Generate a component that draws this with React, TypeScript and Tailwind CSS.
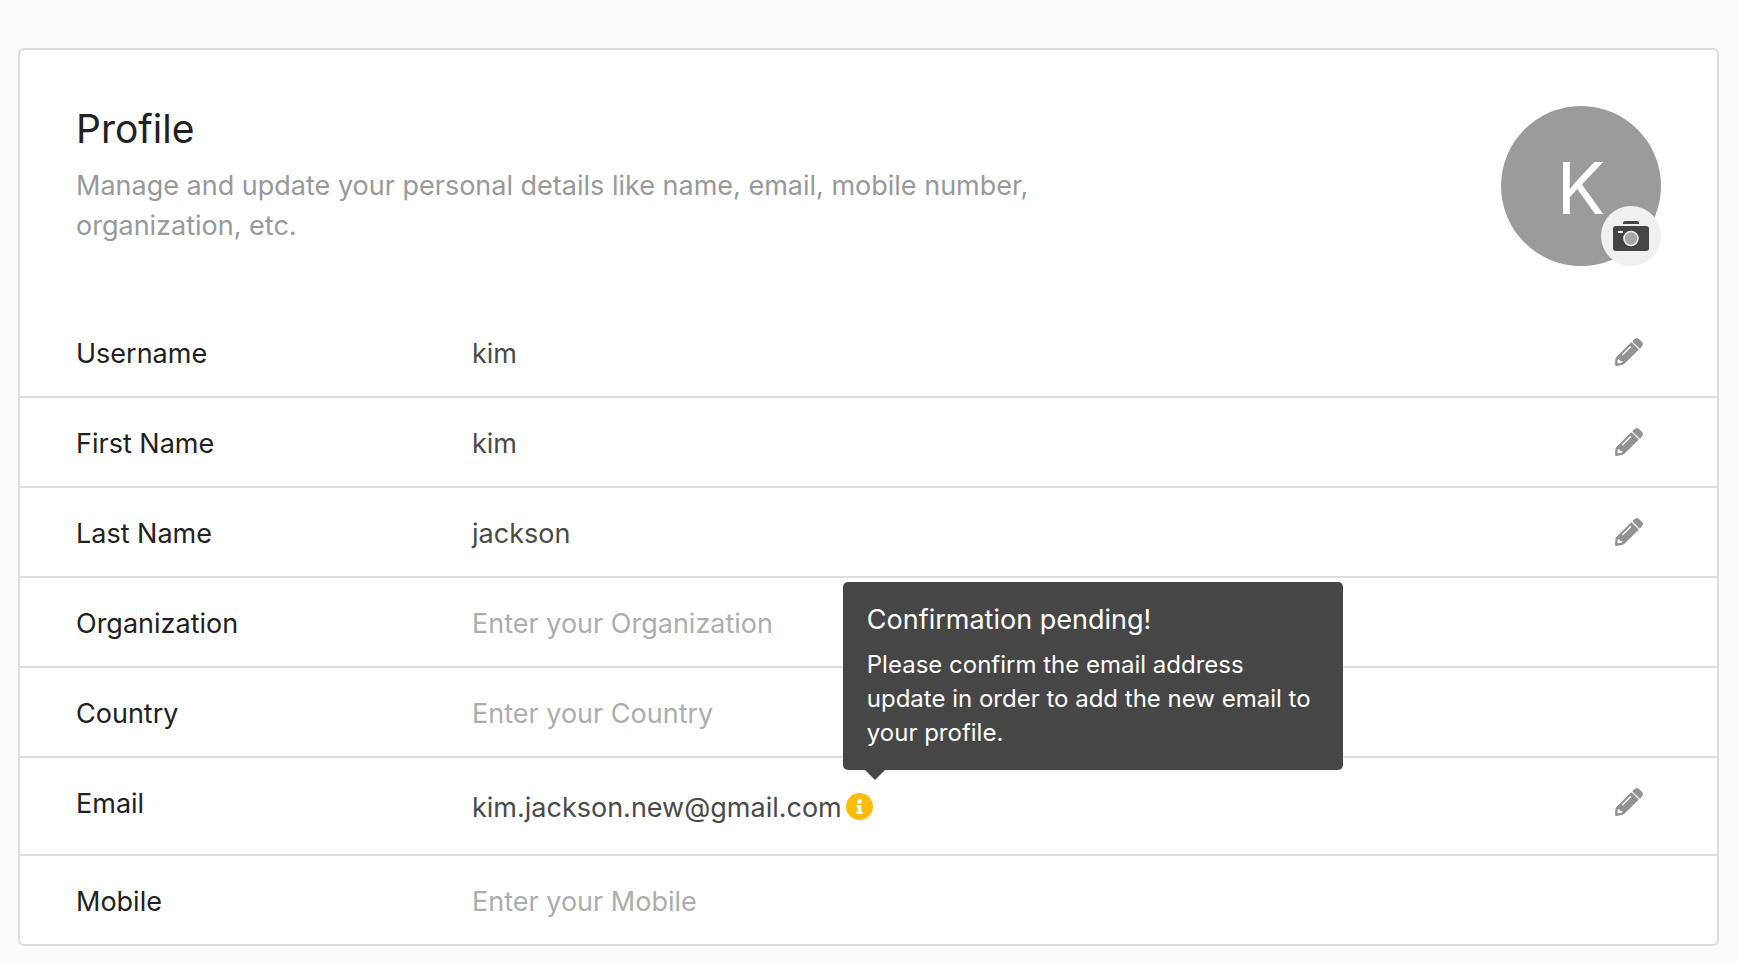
import type { ReactNode } from "react";

function PencilIcon() {
  return (
    <svg viewBox="0 0 28 28" className="block size-7" aria-hidden="true">
      <path
        fill="#929292"
        d="M19.300 1.200 20.500.4Q22.300-.5 23.900.9L27.100 4.100Q28.500 5.600 27.500 7.400L25.800 9.800Q24.900 10.900 24 10L18 4Q17.200 3 18.100 2.300Z"
      />
      <path
        fill="#929292"
        fillRule="evenodd"
        d="M15.700 4.800Q16.400 4.200 17.100 4.900L23.100 10.800Q23.700 11.500 23.100 12.200L9.400 25.800Q8.300 26.800 6.900 27.100L1.300 28Q0 28.100 0 26.800L.4 21.200Q.6 19.800 1.600 18.800ZM15.700 8.200Q15.200 8.200 14.800 8.600L7.300 16.100Q6.700 16.800 7.100 17.200Q7.500 17.600 8.200 17L15.900 9.400Q16.300 9 16.300 8.600Q16.200 8.200 15.700 8.200ZM3.900 21.300Q2.700 21.100 2.600 22.400L2.300 24.200Q2.400 25.200 3.500 25.300L5.300 25.100Q6.700 24.800 7.400 23.900L7.300 23L5.800 22.900Q4.900 22.800 4.800 21.900Z"
      />
    </svg>
  );
}

function CameraIcon() {
  return (
    <svg viewBox="0 0 36 30" className="block w-9" aria-hidden="true">
      <path fill="#454545" d="M10 3V2Q10 0 12 0H24Q26 0 26 2V3Z" />
      <rect x="0" y="5" width="36" height="25" rx="3" fill="#454545" />
      <rect x="5" y="10" width="5" height="2" fill="#fff" />
      <circle cx="18" cy="17.500" r="7" fill="#a6a6a6" stroke="#f0f0f0" strokeWidth="1.600" />
    </svg>
  );
}

function InfoIcon() {
  return (
    <svg viewBox="0 0 27 27" className="block size-[27px]" aria-hidden="true">
      <circle cx="13.500" cy="13.500" r="13.500" fill="#fdbc09" />
      <circle cx="13.600" cy="8.300" r="2.500" fill="#fff" />
      <path fill="#fff" d="M10.300 12H15.400V18.800H16.800V21H10.300V18.800H11.700V14.200H10.300Z" />
    </svg>
  );
}

function PendingNotice() {
  return (
    <button
      type="button"
      aria-label="Confirmation pending"
      aria-describedby="pending-tip"
      className="relative mt-[7px] ml-1 block self-start"
    >
      <InfoIcon />
      <span
        id="pending-tip"
        role="tooltip"
        className="absolute bottom-full -left-[3px] mb-[23px] block w-[500px] rounded-[5px] bg-[#464646] px-6 pt-[18px] pb-5 text-left text-white"
      >
        <span className="block text-[27px] leading-10">Confirmation pending!</span>
        <span className="mt-2 block text-2xl leading-[34px]">
          Please confirm the email address update in order to add the new email to your profile.
        </span>
        <svg viewBox="0 0 20 10" className="absolute top-full left-[22px] w-5" aria-hidden="true">
          <path fill="#464646" d="M0 0H20L10 10Z" />
        </svg>
      </span>
    </button>
  );
}

type Field = {
  id: string;
  label: string;
  value?: string;
  editable?: boolean;
  extra?: ReactNode;
};

const fields: Field[] = [
  { id: "username", label: "Username", value: "kim", editable: true },
  { id: "first-name", label: "First Name", value: "kim", editable: true },
  { id: "last-name", label: "Last Name", value: "jackson", editable: true },
  { id: "organization", label: "Organization" },
  { id: "country", label: "Country" },
  { id: "email", label: "Email", value: "kim.jackson.new@gmail.com", editable: true, extra: <PendingNotice /> },
  { id: "mobile", label: "Mobile" },
];

function FieldRow({ id, label, value, editable, extra }: Field) {
  return (
    <div className="flex items-start border-b-2 border-[#dedede] px-14 pt-6 pb-5 leading-[44px] last:border-b-0">
      {value ? (
        <span className="w-[396px] shrink-0 text-[#212121]">{label}</span>
      ) : (
        <label htmlFor={id} className="w-[396px] shrink-0 text-[#212121]">
          {label}
        </label>
      )}
      {value ? (
        <div className={extra ? "flex flex-1 items-center py-1 text-[#4a4a4a]" : "flex-1 text-[#4a4a4a]"}>
          {value}
          {extra}
        </div>
      ) : (
        <input
          id={id}
          type="text"
          placeholder={`Enter your ${label}`}
          className="h-11 min-w-0 flex-1 bg-transparent text-[#4a4a4a] outline-none placeholder:text-[#adadad]"
        />
      )}
      {editable && (
        <button type="button" aria-label={`Edit ${label}`} className="mr-[18px] flex h-10 items-center">
          <PencilIcon />
        </button>
      )}
    </div>
  );
}

export default function App() {
  return (
    <main className="min-h-screen bg-[#fbfbfb] pt-12 pr-[19px] pb-4 pl-[18px] font-['Inter',sans-serif] text-[27px]">
      <section className="rounded-md border-2 border-[#dcdce1] bg-white">
        <header className="flex items-start justify-between px-14 pt-14 pb-[42px]">
          <div className="max-w-[1000px]">
            <h1 className="text-[39px] leading-[46px] text-[#212121]">Profile</h1>
            <p className="mt-[14px] leading-10 text-[#999999]">
              Manage and update your personal details like name, email, mobile number, organization, etc.
            </p>
          </div>
          <div className="relative flex size-40 shrink-0 items-center justify-center rounded-full bg-[#9b9b9b] pt-1 text-[72px] text-white">
            K
            <button
              type="button"
              aria-label="Change photo"
              className="absolute right-0 bottom-0 flex size-[60px] items-center justify-center rounded-full bg-[#f0f0f0]"
            >
              <CameraIcon />
            </button>
          </div>
        </header>
        {fields.map((field) => (
          <FieldRow key={field.id} {...field} />
        ))}
      </section>
    </main>
  );
}
